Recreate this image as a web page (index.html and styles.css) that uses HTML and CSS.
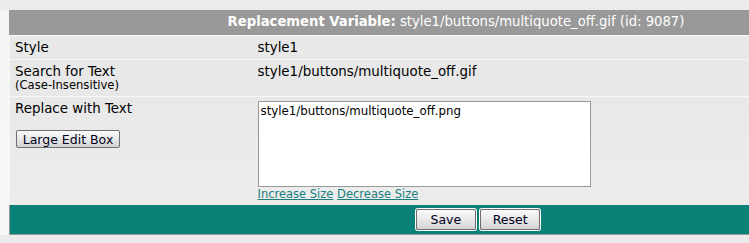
FILE: index.html
```html
<!DOCTYPE html>
<html>
<head>
    <title>Replacement Variable</title>
    <meta name="viewport" content="width=device-width, initial-scale=1.0">
    <link rel="stylesheet" href="styles.css">
</head>
<body>
    <form class="frame">
        <table class="tborder">
            <colgroup>
                <col class="label-col">
                <col>
            </colgroup>
            <tr>
                <td class="tcat" colspan="2"><b>Replacement Variable:</b> style1/buttons/multiquote_off.gif (id: 9087)</td>
            </tr>
            <tr>
                <td class="alt first">Style</td>
                <td class="alt">style1</td>
            </tr>
            <tr>
                <td class="alt first">Search for Text<div class="smallfont">(Case-Insensitive)</div></td>
                <td class="alt">style1/buttons/multiquote_off.gif</td>
            </tr>
            <tr>
                <td class="alt first tall">
                    Replace with Text
                    <div class="edit-box"><input type="button" class="button" value="Large Edit Box"></div>
                </td>
                <td class="alt tall">
                    <textarea class="bigtext">style1/buttons/multiquote_off.png</textarea>
                    <div class="sizer"><a href="#">Increase Size</a> <a href="#">Decrease Size</a></div>
                </td>
            </tr>
            <tr>
                <td class="tfoot" colspan="2">
                    <input type="submit" class="button" value="Save">
                    <input type="reset" class="button" value="Reset">
                </td>
            </tr>
        </table>
    </form>
</body>
</html>
```

FILE: styles.css
```css
html, body {
    overflow: hidden;
}

body {
    margin: 0;
    padding: 0;
    background: linear-gradient(#ebebeb 0, #ebebeb 10px, #f4f4f4 10px, #f8f8f8 243px);
    font-family: "DejaVu Sans", Verdana, sans-serif;
    font-size: 13.4px;
    color: #000;
}

.frame {
    margin: 10px 0 0 9px;
}

.tborder {
    width: 937px;
    table-layout: fixed;
    border-collapse: collapse;
    border-left: 1px solid #999;
    border-bottom: 1px solid #999;
}

.label-col {
    width: 243px;
}

.tborder td {
    padding: 4px 5px;
    line-height: 15px;
    vertical-align: top;
}

.tcat {
    background: #999;
    color: #fff;
    text-align: center;
    font-size: 13.2px;
    height: 17px;
    padding-right: 49px !important;
}

.alt {
    background: #e8e8e8;
    border-top: 1px solid #f7f7f7;
}

.first {
    border-left: 1px solid #f7f7f7;
}

.tall {
    background: linear-gradient(#e8e8e8, #ececec);
}

.smallfont {
    font-size: 11.6px;
    line-height: 13px;
}

.edit-box {
    margin-top: 14px;
}

.button {
    font-family: "DejaVu Sans", Verdana, sans-serif;
    font-size: 12.5px;
    color: #000020;
    height: 19px;
    padding: 0 10px;
    border: 1px solid #6e6e6e;
    border-radius: 2px;
    background: linear-gradient(#fafafa, #e9e9e9 50%, #d2d2d2);
    box-shadow: 0 0 0 1px #fff;
    margin: 0;
}

.edit-box .button {
    width: 104px;
    height: 18px;
    padding: 0;
    box-shadow: none;
    margin-left: 1px;
}

.bigtext {
    display: block;
    width: 327px;
    height: 80px;
    margin: 0;
    padding: 2px;
    border: 1px solid #999;
    background: #fff;
    color: #000;
    font-family: "DejaVu Sans", Verdana, sans-serif;
    font-size: 11.8px;
    line-height: 14px;
    resize: none;
}

.sizer {
    font-size: 11.5px;
    line-height: 14px;
}

.sizer a {
    color: #1b7f7f;
}

.tfoot {
    background: #0a8277;
    text-align: center;
    height: 21px;
}

.tfoot .button {
    width: 60px;
    height: 21px;
    padding: 0;
    margin: 0;
}
```
